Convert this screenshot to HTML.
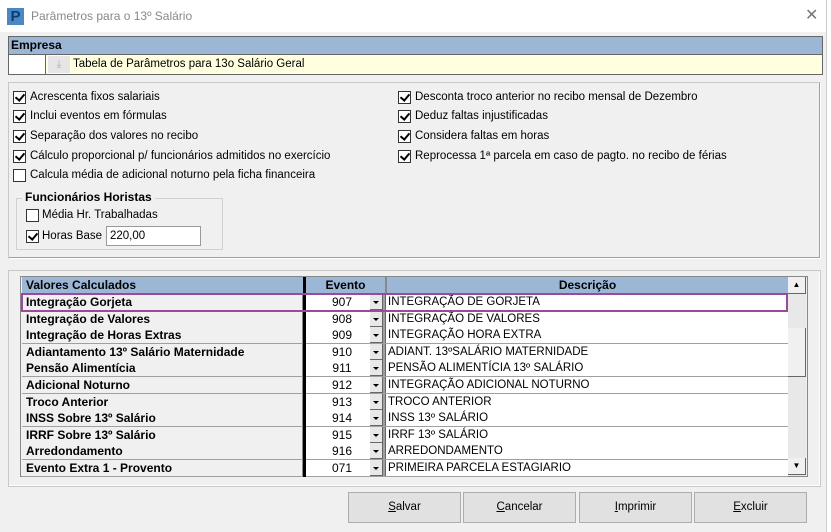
<!DOCTYPE html>
<html><head><meta charset="utf-8"><style>
*{box-sizing:border-box;margin:0;padding:0}
body{width:831px;height:532px;background:#f0f0f0;font-family:"Liberation Sans",sans-serif;font-size:11.5px;color:#000;position:relative;overflow:hidden}
.a{position:absolute}
.cb{position:absolute;width:13px;height:13px;border:1px solid #333;background:#fff}
.cb.k::after{content:"";position:absolute;left:3px;top:0px;width:4px;height:7px;border:solid #000;border-width:0 2px 2px 0;transform:rotate(40deg)}
.lbl{position:absolute;font-size:11.5px;white-space:nowrap}
.row{position:absolute;left:22px;width:766px;height:17px;border-bottom:1px solid #a0a0a0;background:#a0a0a0}
.c1{position:absolute;left:0;width:281px;height:16px;background:#f0f0f0;font-weight:bold;font-size:12px;padding-left:4px;line-height:16px;border-right:1px solid #888}
.c2{position:absolute;left:284px;width:64px;height:16px;background:#fff;text-align:center;line-height:16px;font-size:12px;padding-left:8px}
.dd{position:absolute;left:348px;width:13px;height:16px;background:#e8e8e8;border-right:1px solid #666;border-bottom:1px solid #666}
.dd::after{content:"";position:absolute;left:3px;top:7px;border-left:3.5px solid transparent;border-right:3.5px solid transparent;border-top:3px solid #000}
.c3{position:absolute;left:363px;width:403px;height:16px;background:#fff;line-height:16px;padding-left:2px;font-size:11.5px;border-left:1px solid #666}
.btn{position:absolute;top:492px;height:31px;background:#e1e1e1;border:1px solid #adadad;text-align:center;line-height:29px;font-size:11.5px}
</style></head><body>
<div class="a" style="left:0;top:0;width:826px;height:32px;background:#fff"></div>
<div class="a" style="left:826px;top:0;width:5px;height:532px;background:#fff;border-left:1px solid #ccc"></div>
<div class="a" style="left:7px;top:8px;width:17px;height:17px;background:#4a88c4;color:#0f3b6b;font-weight:bold;font-size:15px;line-height:17px;text-align:center">P</div>
<div class="lbl" style="left:31px;top:9px;color:#888;font-size:12px">Parâmetros para o 13º Salário</div>
<div class="lbl" style="left:805px;top:5px;color:#777;font-size:16px">✕</div>

<div class="a" style="left:8px;top:36px;width:815px;height:19px;background:#9cb6d6;border:1px solid #666;font-weight:bold;font-size:12px;line-height:17px;padding-left:2px">Empresa</div>
<div class="a" style="left:8px;top:55px;width:815px;height:20px;background:#ffffe0;border:1px solid #666;border-top:none"></div>
<div class="a" style="left:9px;top:55px;width:37px;height:19px;background:#fff;border-right:1px solid #666"></div>
<div class="a" style="left:48px;top:56px;width:22px;height:17px;background:#e6e6e6;color:#aaa;text-align:center;font-size:10px;line-height:17px">⤓</div>
<div class="lbl" style="left:73px;top:58px">Tabela de Parâmetros para 13o Salário Geral</div>

<div class="a" style="left:8px;top:82px;width:813px;height:177px;border:1px solid #c8c8c8;border-right-color:#fff;border-bottom-color:#fff;box-shadow:inset -1px -1px 0 #a0a0a0"></div>
<div class="cb k" style="left:13px;top:91px"></div><div class="lbl" style="left:30px;top:91px">Acrescenta fixos salariais</div>
<div class="cb k" style="left:13px;top:110px"></div><div class="lbl" style="left:30px;top:110px">Inclui eventos em fórmulas</div>
<div class="cb k" style="left:13px;top:130px"></div><div class="lbl" style="left:30px;top:130px">Separação dos valores no recibo</div>
<div class="cb k" style="left:13px;top:150px"></div><div class="lbl" style="left:30px;top:150px">Cálculo proporcional p/ funcionários admitidos no exercício</div>
<div class="cb" style="left:13px;top:169px"></div><div class="lbl" style="left:30px;top:169px">Calcula média de adicional noturno pela ficha financeira</div>
<div class="cb k" style="left:398px;top:91px"></div><div class="lbl" style="left:415px;top:91px">Desconta troco anterior no recibo mensal de Dezembro</div>
<div class="cb k" style="left:398px;top:110px"></div><div class="lbl" style="left:415px;top:110px">Deduz faltas injustificadas</div>
<div class="cb k" style="left:398px;top:130px"></div><div class="lbl" style="left:415px;top:130px">Considera faltas em horas</div>
<div class="cb k" style="left:398px;top:150px"></div><div class="lbl" style="left:415px;top:150px">Reprocessa 1ª parcela em caso de pagto. no recibo de férias</div>

<div class="a" style="left:16px;top:198px;width:207px;height:52px;border:1px solid #d0d0d0"></div>
<div class="lbl" style="left:22px;top:190px;background:#f0f0f0;padding:0 3px;font-weight:bold;font-size:12px">Funcionários Horistas</div>
<div class="cb" style="left:26px;top:209px"></div><div class="lbl" style="left:42px;top:209px">Média Hr. Trabalhadas</div>
<div class="cb k" style="left:26px;top:230px"></div><div class="lbl" style="left:42px;top:230px">Horas Base</div>
<div class="a" style="left:106px;top:226px;width:95px;height:20px;background:#fff;border:1px solid #999;padding-left:3px;line-height:18px">220,00</div>

<div class="a" style="left:8px;top:270px;width:813px;height:217px;border:1px solid #c8c8c8;box-shadow:inset -1px -1px 0 #fff"></div>
<div class="a" style="left:20px;top:276px;width:788px;height:201px;border:1px solid #888;background:#f0f0f0"></div>
<div class="a" style="left:22px;top:277px;width:766px;height:17px;background:#9cb6d6;font-weight:bold;font-size:12px;line-height:17px">
 <span class="a" style="left:4px">Valores Calculados</span>
 <span class="a" style="left:284px;width:79px;text-align:center">Evento</span>
 <span class="a" style="left:363px;width:403px;text-align:center;border-left:2px solid #888">Descrição</span>
</div>
<div class="a" style="left:303px;top:277px;width:3px;height:200px;background:#000;z-index:3"></div>

<div class="row" style="top:294px"><div class="c1">Integração Gorjeta</div><div class="c2">907</div><div class="dd"></div><div class="c3">INTEGRAÇÃO DE GORJETA</div></div>
<div class="row" style="top:311px"><div class="c1">Integração de Valores</div><div class="c2">908</div><div class="dd"></div><div class="c3">INTEGRAÇÃO DE VALORES</div></div>
<div class="row" style="top:327px"><div class="c1">Integração de Horas Extras</div><div class="c2">909</div><div class="dd"></div><div class="c3">INTEGRAÇÃO HORA EXTRA</div></div>
<div class="row" style="top:344px"><div class="c1">Adiantamento 13º Salário Maternidade</div><div class="c2">910</div><div class="dd"></div><div class="c3">ADIANT. 13ºSALÁRIO MATERNIDADE</div></div>
<div class="row" style="top:360px"><div class="c1">Pensão Alimentícia</div><div class="c2">911</div><div class="dd"></div><div class="c3">PENSÃO ALIMENTÍCIA 13º SALÁRIO</div></div>
<div class="row" style="top:377px"><div class="c1">Adicional Noturno</div><div class="c2">912</div><div class="dd"></div><div class="c3">INTEGRAÇÃO ADICIONAL NOTURNO</div></div>
<div class="row" style="top:394px"><div class="c1">Troco Anterior</div><div class="c2">913</div><div class="dd"></div><div class="c3">TROCO ANTERIOR</div></div>
<div class="row" style="top:410px"><div class="c1">INSS Sobre 13º Salário</div><div class="c2">914</div><div class="dd"></div><div class="c3">INSS 13º SALÁRIO</div></div>
<div class="row" style="top:427px"><div class="c1">IRRF Sobre 13º Salário</div><div class="c2">915</div><div class="dd"></div><div class="c3">IRRF 13º SALÁRIO</div></div>
<div class="row" style="top:443px"><div class="c1">Arredondamento</div><div class="c2">916</div><div class="dd"></div><div class="c3">ARREDONDAMENTO</div></div>
<div class="row" style="top:460px"><div class="c1">Evento Extra 1 - Provento</div><div class="c2">071</div><div class="dd"></div><div class="c3">PRIMEIRA PARCELA ESTAGIARIO</div></div>
<div class="a" style="left:21px;top:293px;width:767px;height:19px;border:2px solid #9b4a9b;z-index:4"></div>

<div class="a" style="left:788px;top:277px;width:18px;height:199px;background:#e8e8e8"></div>
<div class="a" style="left:788px;top:277px;width:18px;height:17px;background:#f0f0f0;border-right:1px solid #666;border-bottom:1px solid #666;text-align:center;font-size:8px;line-height:16px">▲</div>
<div class="a" style="left:788px;top:328px;width:18px;height:49px;background:#f0f0f0;border-right:1px solid #666;border-bottom:1px solid #666"></div>
<div class="a" style="left:788px;top:458px;width:18px;height:17px;background:#f0f0f0;border-right:1px solid #666;border-bottom:1px solid #666;text-align:center;font-size:8px;line-height:16px">▼</div>

<div class="btn" style="left:348px;width:113px"><u>S</u>alvar</div>
<div class="btn" style="left:463px;width:113px"><u>C</u>ancelar</div>
<div class="btn" style="left:579px;width:113px"><u>I</u>mprimir</div>
<div class="btn" style="left:694px;width:113px"><u>E</u>xcluir</div>
</body></html>
